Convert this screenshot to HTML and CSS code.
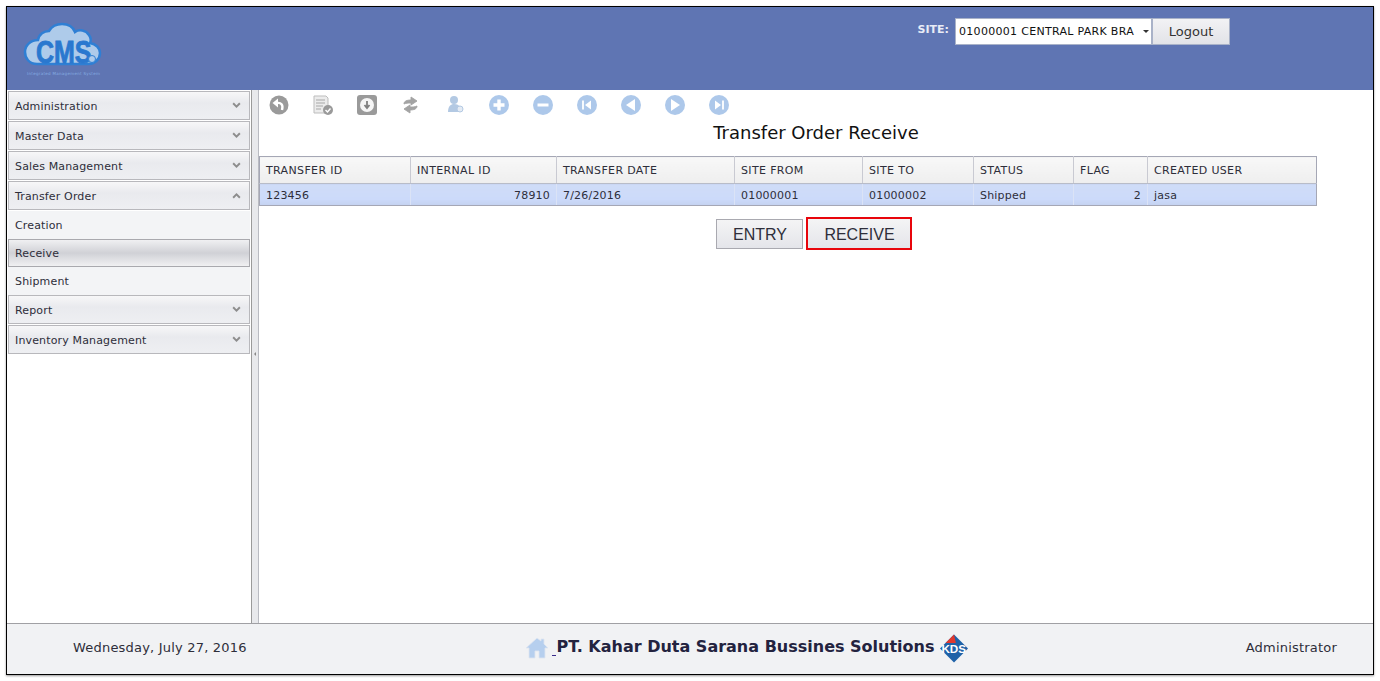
FILE: index.html
```html
<!DOCTYPE html>
<html lang="en">
<head>
    <meta charset="UTF-8">
    <title>Transfer Order Receive</title>
    <link rel="stylesheet" href="styles.css">
</head>
<body>
<div class="frame">
    <header class="top">
        <div class="logo">
            <svg width="77" height="43" viewBox="0 0 77 43">
                <path d="M13 41C5 41 1 35 1 29 1 22 7 17 14 17 15 11 20 8 25 8 28 3 33 1 38 1 44 1 49 4 51 9 55 6 62 7 65 12 67 15 67 18 66 20 72 21 76 25 76 30 76 36 71 41 64 41Z" fill="#aecbea" stroke="#2f7fd4" stroke-width="2.500"/>
                <text class="logo-text" transform="translate(12 40) scale(.78 1)">CMS</text>
                <circle cx="68" cy="36" r="3.5" fill="#aecbea" stroke="#2f7fd4"/>
            </svg>
            <div class="logo-sub">Integrated Management System</div>
        </div>
        <div class="site-box">
            <label class="site-label" for="site">SITE:</label>
            <div class="site-select" id="site">
                <span class="site-value">01000001 CENTRAL PARK BRA</span>
                <span class="caret"></span>
            </div>
            <button class="logout">Logout</button>
        </div>
    </header>

    <div class="main">
        <nav class="side">
            <div class="acc">Administration<svg class="chev" viewBox="0 0 8 6"><path d="M1 1l3 3 3-3"/></svg></div>
            <div class="acc">Master Data<svg class="chev" viewBox="0 0 8 6"><path d="M1 1l3 3 3-3"/></svg></div>
            <div class="acc">Sales Management<svg class="chev" viewBox="0 0 8 6"><path d="M1 1l3 3 3-3"/></svg></div>
            <div class="acc">Transfer Order<svg class="chev" viewBox="0 0 8 6"><path d="M1 5l3-3 3 3"/></svg></div>
            <div class="sub-list">
                <div class="sub">Creation</div>
                <div class="sub sub-on">Receive</div>
                <div class="sub">Shipment</div>
            </div>
            <div class="acc">Report<svg class="chev" viewBox="0 0 8 6"><path d="M1 1l3 3 3-3"/></svg></div>
            <div class="acc">Inventory Management<svg class="chev" viewBox="0 0 8 6"><path d="M1 1l3 3 3-3"/></svg></div>
        </nav>
        <div class="splitter"><span class="split-arrow"></span></div>

        <section class="content">
            <div class="toolbar">
                <svg class="ic" viewBox="0 0 20 20"><circle cx="10" cy="10" r="9.5" fill="#9a9a9a"/><path d="M9 3.500L3.500 8 9 12.500Z" fill="#fff"/><path d="M8 8c4-.5 6.500 1.500 5 7" stroke="#fff" stroke-width="2.400" fill="none"/></svg>
                <svg class="ic" viewBox="0 0 20 20"><path d="M1 1h12l2 2v15H1Z" fill="#ececec" stroke="#bdbdbd"/><path d="M3 5h9M3 8h9M3 11h7M3 14h5" stroke="#a8a8a8"/><circle cx="15" cy="15" r="5" fill="#9a9a9a"/><path d="M12.500 15l2 2 3-3.500" stroke="#fff" stroke-width="1.400" fill="none"/></svg>
                <svg class="ic" viewBox="0 0 20 20"><rect x="0" y="0" width="20" height="20" rx="3" fill="#9a9a9a"/><circle cx="10" cy="10" r="7" fill="#f6f6f6"/><path d="M10 6v6M7.500 10l2.500 3 2.500-3" stroke="#808080" stroke-width="1.800" fill="none"/></svg>
                <svg class="ic" viewBox="0 0 20 20"><path d="M3 9C3 6 6 5 10 5V2L16 6 10 10V8C7 8 5 8 3 9ZM16 11C16 14 13 15 9 15V18L3 14 9 10V12C12 12 14 12 16 11Z" fill="#a3a3a3" stroke="#a3a3a3" stroke-width=".9" stroke-linejoin="round"/></svg>
                <svg class="ic" viewBox="0 0 20 20"><circle cx="9" cy="5" r="4" fill="#b3c9e3"/><path d="M3 17c0-6 3-8 6-8s5 1 6 3l-1 5Z" fill="#b3c9e3"/><circle cx="15" cy="14" r="3" fill="#e4ebf4" stroke="#b3c9e3"/></svg>
                <svg class="ic" viewBox="0 0 20 20"><circle cx="10" cy="10" r="10" fill="#adc8ea"/><path d="M10 4.500v11M4.500 10h11" stroke="#fff" stroke-width="3.400"/></svg>
                <svg class="ic" viewBox="0 0 20 20"><circle cx="10" cy="10" r="10" fill="#adc8ea"/><path d="M4.500 10h11" stroke="#fff" stroke-width="3"/></svg>
                <svg class="ic" viewBox="0 0 20 20"><circle cx="10" cy="10" r="10" fill="#adc8ea"/><path d="M6 5.500v9" stroke="#fff" stroke-width="1.800"/><path d="M14 5.500v9L8 10Z" fill="#fff"/></svg>
                <svg class="ic" viewBox="0 0 20 20"><circle cx="10" cy="10" r="10" fill="#adc8ea"/><path d="M14 4v12L5 10Z" fill="#fff"/></svg>
                <svg class="ic" viewBox="0 0 20 20"><circle cx="10" cy="10" r="10" fill="#adc8ea"/><path d="M6 4v12l9-6Z" fill="#fff"/></svg>
                <svg class="ic" viewBox="0 0 20 20"><circle cx="10" cy="10" r="10" fill="#adc8ea"/><path d="M14 5.500v9" stroke="#fff" stroke-width="1.800"/><path d="M6 5.500v9l6-4.500Z" fill="#fff"/></svg>
            </div>
            <h1 class="title">Transfer Order Receive</h1>
            <table class="grid">
                <thead>
                    <tr>
                        <th class="c1">TRANSFER ID</th>
                        <th class="c2">INTERNAL ID</th>
                        <th class="c3">TRANSFER DATE</th>
                        <th class="c4">SITE FROM</th>
                        <th class="c5">SITE TO</th>
                        <th class="c6">STATUS</th>
                        <th class="c7">FLAG</th>
                        <th class="c8">CREATED USER</th>
                    </tr>
                </thead>
                <tbody>
                    <tr>
                        <td>123456</td>
                        <td class="num">78910</td>
                        <td>7/26/2016</td>
                        <td>01000001</td>
                        <td>01000002</td>
                        <td>Shipped</td>
                        <td class="num">2</td>
                        <td>jasa</td>
                    </tr>
                </tbody>
            </table>
            <div class="actions">
                <button class="act">ENTRY</button>
                <button class="act act-mark">RECEIVE</button>
            </div>
        </section>
    </div>

    <footer class="bottom">
        <div class="foot-date">Wednesday, July 27, 2016</div>
        <div class="foot-mid">
            <svg class="home" width="24" height="22" viewBox="0 0 24 22"><path d="M12 1L1 11h3v10h6v-7h4v7h6V11h3l-4-4V2h-3v2Z" fill="#b6cfee" stroke="#dfe6f0" stroke-width=".8"/></svg>
            <span class="dash"></span><span class="company">PT. Kahar Duta Sarana Bussines Solutions</span>
            <svg class="kds" width="28" height="29" viewBox="0 0 30 30">
                <path d="M15 0L30 15 15 30 0 15Z" fill="#1f62a8"/>
                <path d="M15 0L6 9H17Z" fill="#e0392f"/>
                <text x="1.500" y="19.500" class="kds-text">KDS</text>
            </svg>
        </div>
        <div class="foot-user">Administrator</div>
    </footer>
</div>
</body>
</html>
```

FILE: styles.css
```css
* { box-sizing: border-box; }
html, body { margin: 0; height: 100%; }
body { background: #fff; font-family: "DejaVu Sans", sans-serif; font-size: 11px; color: #2e2e3a; padding: 6px 6px 5px 6px; overflow: hidden; }

.frame { height: 669px; border: 1px solid #000; display: flex; flex-direction: column; box-shadow: 0 1px 2px #999; }

.top { height: 83px; background: #5f75b3; display: flex; justify-content: space-between; flex: none; }
.logo { padding: 16px 0 0 17px; width: 110px; }
.logo svg { display: block; overflow: visible; }
.logo-text { font-family: "Liberation Sans", sans-serif; font-weight: bold; font-size: 32px; fill: #2a78cf; stroke: #2a78cf; stroke-width: .9px; }
.logo-sub { font-size: 4px; letter-spacing: .3px; color: #86ade2; white-space: nowrap; margin-top: 5px; margin-left: 3px; }

.site-box { display: flex; align-items: flex-start; padding: 11px 143px 0 0; }
.site-label { color: #e8ecf6; font-weight: bold; font-size: 11px; margin: 5px 6px 0 0; }
.site-select { width: 197px; height: 27px; background: #fff; border: 1px solid #a9b2c8; display: flex; align-items: center; padding: 0 2px 0 3px; color: #111; justify-content: space-between; }
.site-value { width: 176px; white-space: nowrap; letter-spacing: .3px; }
.caret { border: 3.500px solid transparent; border-top-color: #333; border-bottom: 0; }
.logout { width: 78px; height: 27px; border: 1px solid #a9b2c8; background: linear-gradient(#f2f2f4, #e2e3e8); font: 13px "DejaVu Sans", sans-serif; color: #333; padding: 0; }

.main { flex: 1; display: flex; min-height: 0; }

.side { width: 244px; flex: none; padding: 1px 1px 0 1px; background: #fff; }
.acc { height: 29px; margin-bottom: 1px; border: 1px solid #b8b8bc; background: linear-gradient(#f7f7f8, #e9eaee 40%, #eeeff2); padding: 2px 8px 0 6px; display: flex; align-items: center; justify-content: space-between; letter-spacing: .15px; }
.chev { width: 9px; height: 7px; fill: none; stroke: #8d8d8d; stroke-width: 1.700; margin-top: -2px; }
.sub-list { background: #f3f4f6; }
.sub { height: 28px; padding: 0 6px; display: flex; align-items: center; letter-spacing: .15px; border: 1px solid transparent; }
.sub-on { border-color: #a9a9ae; background: linear-gradient(#f0f0f2, #d0d1d6 50%, #f0f0f2); }

.splitter { width: 8px; flex: none; background: #e8e9ec; border-left: 1px solid #9a9a9a; border-right: 1px solid #b9bbc2; display: flex; align-items: center; justify-content: center; padding-bottom: 6px; }
.split-arrow { border: 2.500px solid transparent; border-right-color: #888; border-left: 0; }

.content { flex: 1; min-width: 0; background: #fff; padding: 5px 0 0 0; }
.toolbar { display: flex; gap: 24px; padding-left: 10px; height: 20px; }
.ic { width: 20px; height: 20px; flex: none; }
.title { margin: 8px 0 0; text-align: center; font-size: 18px; font-weight: normal; color: #111; line-height: 20px; width: 1114px; }

.grid { width: 1058px; margin-top: 13px; border-collapse: collapse; table-layout: fixed; border: 1px solid #a5a7b5; }
.grid th { height: 27px; background: linear-gradient(#f8f8f8, #eeeeee); border-right: 1px solid #c9cad2; border-bottom: 1px solid #b8bcc8; text-align: left; font-weight: normal; padding: 0 6px; letter-spacing: .35px; }
.grid td { height: 22px; background: linear-gradient(#cfdcf7, #ccdafa 70%, #c4d2f0); border-right: 1px solid #dbe3f6; border-bottom: 1px solid #a5a7b5; padding: 2px 6px 0; letter-spacing: .2px; }
.grid th:last-child, .grid td:last-child { border-right-color: #a5a7b5; }
.grid .num { text-align: right; }
.c1 { width: 151px; }
.c2 { width: 146px; }
.c3 { width: 178px; }
.c4 { width: 128px; }
.c5 { width: 111px; }
.c6 { width: 100px; }
.c7 { width: 74px; }

.actions { display: flex; justify-content: center; gap: 3px; width: 1109px; margin-top: 13px; }
.act { height: 30px; padding: 2px 0 0 2px; border: 1px solid #a9a9b0; background: linear-gradient(#f4f4f5, #e4e5ea); font: 16px "Liberation Sans", "DejaVu Sans", sans-serif; color: #2e2e3a; width: 87px; }
.act-mark { width: 106px; height: 33px; border: 2px solid #e8050c; margin-top: -2px; }

.bottom { height: 51px; flex: none; background: #f1f2f4; border-top: 1px solid #a0a0a4; display: flex; align-items: center; justify-content: space-between; padding: 0 36px 3px 66px; font-size: 13px; }
.foot-date { width: 383px; letter-spacing: .2px; }
.foot-mid { display: flex; align-items: center; }
.home { display: block; }
.dash { width: 4px; height: 1px; background: #3a2a8a; margin: 16px 0 0 3px; }
.company { font-weight: bold; font-size: 16px; color: #23233f; margin: -2px 5px 0 0; }
.kds { display: block; margin-top: 2px; }
.kds-text { font-family: "Liberation Sans", sans-serif; font-size: 12.500px; font-weight: bold; fill: #fff; }
.foot-user { width: 300px; text-align: right; letter-spacing: .2px; }
```
